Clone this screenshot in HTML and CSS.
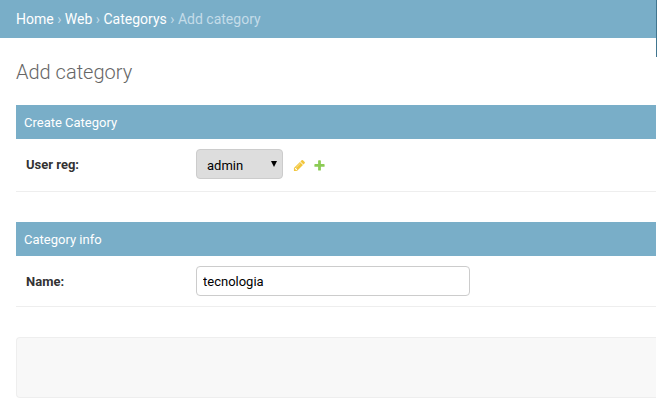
FILE: index.html
```html
<!DOCTYPE html>
<html lang="en">
<head>
<meta charset="utf-8">
<title>Add category</title>
<link rel="stylesheet" href="styles.css">
</head>
<body>
<div class="page">
  <nav class="breadcrumbs">
    <a href="#">Home</a> › <a href="#">Web</a> › <a href="#">Categorys</a> › Add category
  </nav>
  <main class="content">
    <h1>Add category</h1>
    <form>
      <section class="module">
        <h2>Create Category</h2>
        <div class="form-row">
          <label for="user">User reg:</label>
          <div class="related">
            <span class="select-box">
              <select id="user"><option>admin</option></select>
              <svg class="arrow" viewBox="0 0 6 6" aria-hidden="true"><path d="M0 0h6L3 6z"/></svg>
            </span>
            <a class="icon-link" href="#" aria-label="Change user">
              <svg viewBox="0 0 1792 1792" fill="#efb80b"><path d="M491 1536l91-91-235-235-91 91v107h128v128h107zm523-928q0-22-22-22-10 0-17 7l-542 542q-7 7-7 17 0 22 22 22 10 0 17-7l542-542q7-7 7-17zm-54-192l416 416-832 832h-416v-416zm683 96q0 53-37 90l-166 166-416-416 166-165q36-38 90-38 53 0 91 38l235 234q37 39 37 91z"/></svg>
            </a>
            <a class="icon-link" href="#" aria-label="Add user">
              <svg viewBox="0 0 1792 1792" fill="#70bf2b"><path d="M1600 796v192q0 40-28 68t-68 28h-416v416q0 40-28 68t-68 28h-192q-40 0-68-28t-28-68v-416h-416q-40 0-68-28t-28-68v-192q0-40 28-68t68-28h416v-416q0-40 28-68t68-28h192q40 0 68 28t28 68v416h416q40 0 68 28t28 68z"/></svg>
            </a>
          </div>
        </div>
      </section>
      <section class="module">
        <h2>Category info</h2>
        <div class="form-row">
          <label for="name">Name:</label>
          <input id="name" type="text" value="tecnologia">
        </div>
      </section>
      <div class="submit-row"></div>
    </form>
  </main>
  <div class="edge"></div>
</div>
</body>
</html>
```
FILE: styles.css
```css
* {
  box-sizing: border-box;
}

body {
  margin: 0;
  background: #fff;
  color: #333;
  font: 13px/20px Roboto, sans-serif;
}

.page {
  position: relative;
  padding-right: 1px;
}

.edge {
  position: absolute;
  top: 0;
  right: 0;
  width: 1px;
  height: 57px;
  background: #417690;
}

.breadcrumbs {
  padding: 10px 16px;
  background: #79aec8;
  color: #c4dce8;
  font-size: 14px;
  line-height: 18px;
}

.breadcrumbs a {
  color: #fff;
  text-decoration: none;
}

.content {
  padding: 20px 0 12px 16px;
}

h1 {
  margin: 0 0 19px;
  color: #666;
  font-size: 20px;
  font-weight: 300;
  line-height: 28px;
}

.module {
  margin-bottom: 30px;
}

.module h2 {
  margin: 0;
  padding: 9px 8px 7px;
  background: #79aec8;
  color: #fff;
  font-size: 13px;
  font-weight: 400;
  line-height: 18px;
}

.form-row {
  display: flex;
  align-items: flex-start;
  padding: 10px;
  border-bottom: 1px solid #eee;
}

.form-row label {
  width: 170px;
  padding-top: 6px;
  font-weight: 700;
}

.related {
  display: flex;
  align-items: flex-start;
  min-height: 32px;
}

.select-box {
  position: relative;
  display: flex;
  margin-right: 10px;
}

select,
input {
  height: 30px;
  border: 1px solid #ccc;
  border-radius: 4px;
  color: #000;
  font: 13px Roboto, sans-serif;
}

select {
  width: 87px;
  padding: 2px 10px 0;
  background: #ddd;
  appearance: none;
}

input {
  width: 274px;
  padding: 0 6px;
  background: #fff;
}

.arrow {
  position: absolute;
  top: 12px;
  right: 6px;
  width: 6px;
  height: 6px;
  pointer-events: none;
}

.icon-link {
  display: flex;
  margin: 10px 7px 0 0;
}

.icon-link svg {
  width: 13px;
  height: 13px;
  opacity: 0.8;
}

.submit-row {
  height: 61px;
  border: 1px solid #eee;
  border-right: 0;
  border-radius: 4px 0 0 4px;
  background: #f8f8f8;
}
```
